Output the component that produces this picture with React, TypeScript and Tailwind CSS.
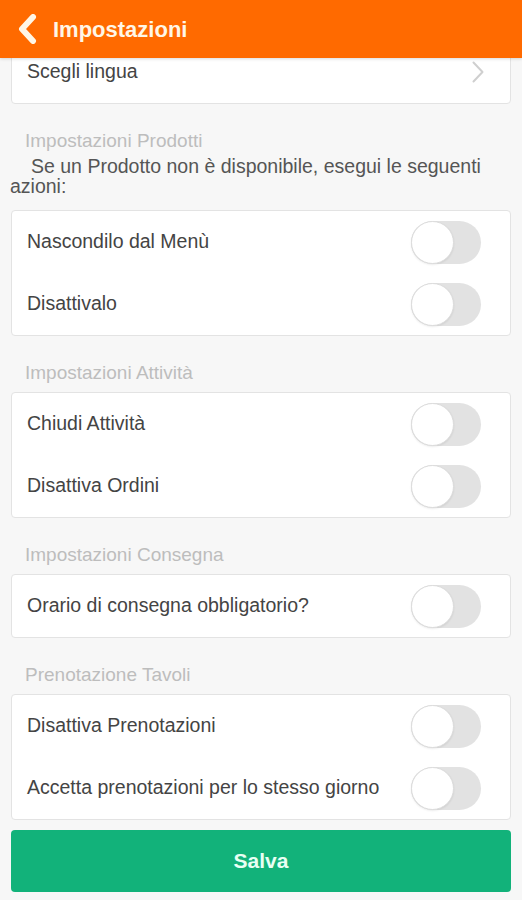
import { useState } from "react";

type Row = { id: string; label: string };

const Toggle = ({ on, onChange }: { on: boolean; onChange: () => void }) => (
  <button
    onClick={onChange}
    className={`relative h-[43px] w-[70px] shrink-0 rounded-full ${on ? "bg-[#1db37a]" : "bg-[#e2e2e2]"}`}
  >
    <span
      className={`absolute top-0 h-[43px] w-[43px] rounded-full border border-[#dcdcdc] bg-white shadow-[0_1px_2px_rgba(0,0,0,0.08)] ${on ? "right-0" : "left-0"}`}
    />
  </button>
);

const Label = ({ children }: { children: React.ReactNode }) => (
  <div className="mt-[26px] mb-[8px] px-[25px] text-[19px] leading-[22px] text-[#bdbdbd]">{children}</div>
);

const Card = ({ rows, state, toggle }: { rows: Row[]; state: Record<string, boolean>; toggle: (id: string) => void }) => (
  <div className="mx-[11px] rounded-[4px] border border-[#e3e3e3] bg-white">
    {rows.map((row) => (
      <div key={row.id} className="flex h-[62px] items-center justify-between pl-[15px] pr-[29px]">
        <span className="text-[19.5px] text-[#444]">{row.label}</span>
        <Toggle on={!!state[row.id]} onChange={() => toggle(row.id)} />
      </div>
    ))}
  </div>
);

export default function App() {
  const [state, setState] = useState<Record<string, boolean>>({});
  const toggle = (id: string) => setState((s) => ({ ...s, [id]: !s[id] }));

  return (
    <div className="flex h-[900px] w-full flex-col overflow-hidden bg-[#f7f7f7] font-['Liberation_Sans',Arial,sans-serif]">
      {/* Header */}
      <div className="relative z-10 flex h-[58px] shrink-0 items-center gap-[15px] bg-[#ff6a00] pl-[17px] shadow-[0_1px_3px_rgba(0,0,0,0.15)]">
        <svg width="21" height="30" viewBox="0 0 21 30" fill="none">
          <path d="M16 3 L5 15 L16 27" stroke="#fff6e6" strokeWidth="6" strokeLinecap="round" strokeLinejoin="round" />
        </svg>
        <span className="text-[22px] font-bold text-[#fff6e6]">Impostazioni</span>
      </div>

      {/* Scrolled content */}
      <div className="flex-1 overflow-hidden">
        <div className="-mt-[18px]">
          <div className="mx-[11px] rounded-[4px] border border-[#e3e3e3] bg-white">
            <div className="flex h-[62px] items-center justify-between pl-[15px] pr-[26px]">
              <span className="text-[19.5px] text-[#444]">Scegli lingua</span>
              <svg width="12" height="22" viewBox="0 0 12 22" fill="none">
                <path d="M1.5 1.5 L10.5 11 L1.5 20.5" stroke="#cfcfcf" strokeWidth="2" strokeLinecap="round" strokeLinejoin="round" />
              </svg>
            </div>
          </div>

          <Label>Impostazioni Prodotti</Label>
          <p className="-mt-[4px] mb-[14px] px-[10px] indent-[21px] text-[19.5px] leading-[20px] text-[#555]">
            Se un Prodotto non è disponibile, esegui le seguenti azioni:
          </p>
          <Card
            rows={[
              { id: "hide", label: "Nascondilo dal Menù" },
              { id: "disable", label: "Disattivalo" },
            ]}
            state={state}
            toggle={toggle}
          />

          <Label>Impostazioni Attività</Label>
          <Card
            rows={[
              { id: "close", label: "Chiudi Attività" },
              { id: "orders", label: "Disattiva Ordini" },
            ]}
            state={state}
            toggle={toggle}
          />

          <Label>Impostazioni Consegna</Label>
          <Card rows={[{ id: "time", label: "Orario di consegna obbligatorio?" }]} state={state} toggle={toggle} />

          <Label>Prenotazione Tavoli</Label>
          <Card
            rows={[
              { id: "booking", label: "Disattiva Prenotazioni" },
              { id: "sameday", label: "Accetta prenotazioni per lo stesso giorno" },
            ]}
            state={state}
            toggle={toggle}
          />

          <div className="mx-[11px] mt-[10px]">
            <button className="flex h-[62px] w-full items-center justify-center rounded-[4px] bg-[#12b27a] text-[21px] font-bold text-[#e8fff4]">
              Salva
            </button>
          </div>
        </div>
      </div>
    </div>
  );
}
